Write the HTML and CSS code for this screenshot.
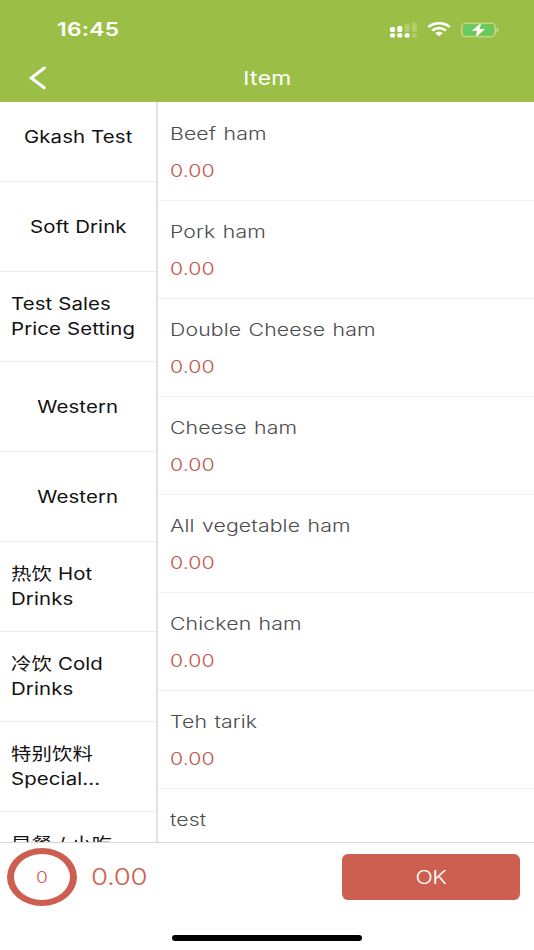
FILE: index.html
```html
<!DOCTYPE html>
<html lang="zh-CN">
<head>
    <meta charset="UTF-8">
    <meta name="viewport" content="width=device-width, initial-scale=1.0">
    <title>Item</title>
    <link rel="stylesheet" href="styles.css">
</head>
<body>
    <header class="header">
        <div class="status-bar">
            <span class="time">16:45</span>
            <div class="status-icons">
                <svg class="signal" width="28" height="16" viewBox="0 0 28 16" fill="#fff">
                    <rect x="0" y="5" width="5" height="5" rx="1.5"/>
                    <rect x="7.3" y="4" width="5" height="6" rx="1.5"/>
                    <rect x="14.6" y="2" width="5" height="8" rx="1.5" opacity=".22"/>
                    <rect x="22" y="0.5" width="5" height="9.5" rx="1.5" opacity=".22"/>
                    <rect x="0" y="11.3" width="5" height="4.2" rx="1.5"/>
                    <rect x="7.3" y="11.3" width="5" height="4.2" rx="1.5"/>
                    <rect x="14.6" y="11.3" width="5" height="4.2" rx="1.5"/>
                    <rect x="22" y="11.3" width="5" height="4.2" rx="1.5" opacity=".22"/>
                </svg>
                <svg class="wifi" width="24" height="15" viewBox="0 0 24 15" fill="none" stroke="#fff" stroke-width="2.7">
                    <path d="M1.3 5.1C7.2 -.1 16.8 -.1 22.7 5.1"/>
                    <path d="M5.2 8.6C9 5.3 15 5.3 18.8 8.6"/>
                    <path d="M8.2 11.2C10.3 9.2 13.7 9.2 15.8 11.2L12 14.3Z" fill="#fff" stroke="none"/>
                </svg>
                <svg class="battery" width="38" height="16" viewBox="0 0 38 16">
                    <rect x=".7" y="1.2" width="33.6" height="13.6" rx="4" fill="none" stroke="#cfdf9d" stroke-width="1.1"/>
                    <rect x="2.7" y="2.8" width="29.6" height="10.4" rx="2.5" fill="#62cb63"/>
                    <path d="M35.6 5.5C38 6.2 38 9.8 35.6 10.5Z" fill="#cfdf9d"/>
                    <path d="M20.3 .8L11 8.8H16.4L14.5 15.2L24 7.1H18.5Z" fill="#fff" stroke="#8fc655" stroke-width="1.4" paint-order="stroke"/>
                </svg>
            </div>
        </div>
        <div class="nav-bar">
            <svg class="back" width="18" height="26" viewBox="0 0 18 26" fill="none" stroke="#fff" stroke-width="3" stroke-linecap="round">
                <path d="M15.3 3L2.2 13L15.3 22.8"/>
            </svg>
            <h1 class="title">Item</h1>
        </div>
    </header>

    <main class="content">
        <nav class="category-list">
            <div class="category"><span>Gkash Test</span></div>
            <div class="category"><span>Soft Drink</span></div>
            <div class="category multi"><span>Test Sales<br>Price Setting</span></div>
            <div class="category"><span>Western</span></div>
            <div class="category"><span>Western</span></div>
            <div class="category multi"><span>热饮 Hot<br>Drinks</span></div>
            <div class="category multi"><span>冷饮 Cold<br>Drinks</span></div>
            <div class="category multi"><span>特别饮料<br>Special...</span></div>
            <div class="category multi"><span>早餐 / 小吃</span></div>
        </nav>
        <section class="item-list">
            <div class="item"><p class="name">Beef ham</p><p class="price">0.00</p></div>
            <div class="item"><p class="name">Pork ham</p><p class="price">0.00</p></div>
            <div class="item"><p class="name">Double Cheese ham</p><p class="price">0.00</p></div>
            <div class="item"><p class="name">Cheese ham</p><p class="price">0.00</p></div>
            <div class="item"><p class="name">All vegetable ham</p><p class="price">0.00</p></div>
            <div class="item"><p class="name">Chicken ham</p><p class="price">0.00</p></div>
            <div class="item"><p class="name">Teh tarik</p><p class="price">0.00</p></div>
            <div class="item"><p class="name">test</p></div>
        </section>
    </main>

    <footer class="footer">
        <div class="cart-bar">
            <div class="count"><span>0</span></div>
            <span class="total">0.00</span>
            <button class="ok"><span>OK</span></button>
        </div>
        <div class="home-indicator"></div>
    </footer>
</body>
</html>
```
FILE: styles.css
```css
* {
    box-sizing: border-box;
    margin: 0;
    padding: 0;
}
body {
    height: 950px;
    display: flex;
    flex-direction: column;
    overflow: hidden;
    font-family: Inter, "Noto Sans CJK SC", sans-serif;
    background-color: #fff;
    color: #111;
}
.header {
    height: 102px;
    flex: none;
    background-color: #9bbf46;
    color: #fff;
}
.status-bar {
    height: 54px;
    padding: 5px 35px 0 57px;
    display: flex;
    justify-content: space-between;
    align-items: center;
}
/* wide lettering */
.time, .title, .category span, .name, .price, .count span, .total, .ok span {
    display: inline-block;
    transform: scaleX(1.2);
    transform-origin: left center;
    white-space: nowrap;
}
.time {
    font-size: 19px;
    font-weight: 600;
    letter-spacing: 0.2px;
}
.status-icons {
    display: flex;
    align-items: center;
}
.wifi {
    margin-left: 9px;
}
.battery {
    margin-left: 10px;
}
.nav-bar {
    height: 48px;
    padding-left: 29px;
    display: grid;
    grid-template-columns: 18px 1fr 46px;
    align-items: center;
}
.title {
    font-size: 19px;
    font-weight: 400;
    letter-spacing: 0.3px;
    text-align: center;
    transform-origin: center;
}
.content {
    flex: none;
    height: 740px;
    display: flex;
    overflow: hidden;
}
.category-list {
    width: 158px;
    flex: none;
    margin-top: -10px;
    border-right: 2px solid #e2e2e2;
}
.category {
    height: 90px;
    padding-top: 1px;
    display: flex;
    align-items: center;
    justify-content: center;
    border-bottom: 1px solid #ececec;
    font-size: 17px;
    line-height: 25px;
    letter-spacing: 0.1px;
}
.category span {
    transform-origin: center;
}
.category.multi {
    align-items: flex-start;
    justify-content: flex-start;
    padding: 20px 0 0 11px;
}
.category.multi span {
    transform-origin: left center;
}
.item-list {
    flex: 1;
    margin-top: 1px;
}
.item {
    height: 98px;
    padding: 19px 0 0 12px;
    border-bottom: 1px solid #efefef;
    display: flex;
    flex-direction: column;
    align-items: flex-start;
    gap: 13px;
    font-size: 17px;
    line-height: 24px;
}
.name, .price {
    transform: scaleX(1.25);
    letter-spacing: 0.1px;
    font-weight: 350;
}
.name {
    color: #4c4c4c;
    word-spacing: 1px;
}
.price {
    color: #c0564b;
}
.footer {
    height: 108px;
    flex: none;
    border-top: 1px solid #d8d8d8;
    background-color: #fff;
}
.cart-bar {
    height: 68px;
    padding: 0 14px 0 7px;
    display: flex;
    align-items: center;
    color: #cd5f50;
}
.count {
    width: 70px;
    height: 58px;
    border: solid #cd5f50;
    border-width: 6px 7px;
    border-radius: 50%;
    display: flex;
    align-items: center;
    justify-content: center;
    font-size: 16px;
    font-weight: 300;
}
.count span {
    transform-origin: center;
}
.total {
    margin-left: 14px;
    font-size: 23px;
    font-weight: 300;
    letter-spacing: -0.3px;
}
.ok {
    width: 178px;
    height: 46px;
    margin-left: auto;
    border: none;
    border-radius: 6px;
    background-color: #cd5f50;
    color: #fff;
    font-family: inherit;
    font-size: 19px;
    font-weight: 300;
    letter-spacing: -0.4px;
    cursor: pointer;
}
.ok span {
    transform-origin: center;
}
.home-indicator {
    width: 190px;
    height: 6px;
    margin: 24px auto 0;
    border-radius: 3px;
    background-color: #000;
}
```
